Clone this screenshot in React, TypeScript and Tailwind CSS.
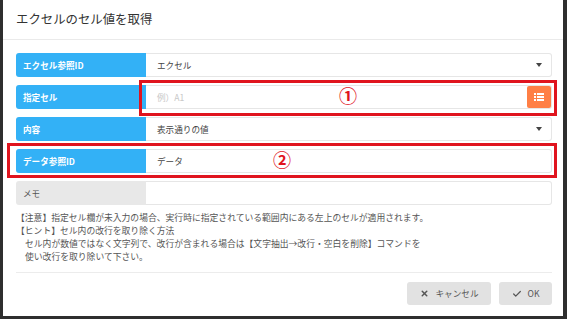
import { Check, X } from "lucide-react"

const font = { fontFamily: '"Noto Sans CJK JP", "Noto Sans", sans-serif' }

function Row({ label, children, gray }: any) {
	return (
		<div className="flex h-[24px] w-full">
			<div
				className={`w-[130px] h-full flex items-center pl-[7px] rounded-l-[3px] text-[8.6px] ${
					gray ? "bg-[#e8e8e8] text-[#555]" : "bg-[#33b1f6] text-white font-bold"
				}`}
			>
				{label}
			</div>
			<div className="flex-1 h-full flex items-center bg-white border border-[#e6e6e6] border-l-0 rounded-r-[3px] text-[8.6px] text-[#444]">
				{children}
			</div>
		</div>
	)
}

function Caret() {
	return <span className="ml-auto mr-[9px] w-0 h-0 border-l-[3px] border-r-[3px] border-t-[4px] border-l-transparent border-r-transparent border-t-[#444]" />
}

export default function App() {
	return (
		<div className="w-[567px] h-[319px] bg-[#2e2e2e] pl-[3px] pr-[4px] pb-[3px]" style={font}>
			<div className="relative w-full h-full bg-white flex flex-col">
				{/* Header */}
				<div className="h-[40px] border-b border-[#eaeaea] flex items-center pl-[13px] text-[12.4px] text-[#333]">
					エクセルのセル値を取得
				</div>

				{/* Form */}
				<div className="flex flex-col gap-[8px] px-[13px] pr-[11px] pt-[13px]">
					<Row label="エクセル参照ID">
						<span className="pl-[11px]">エクセル</span>
						<Caret />
					</Row>
					<Row label="指定セル">
						<span className="pl-[11px] text-[#c8c8c8]">例）A1</span>
						<div className="ml-auto h-[22px] w-[24px] bg-[#ff7f45] rounded-[2px] flex flex-col items-center justify-center gap-[1.5px]">
							{[0, 1, 2].map((i) => (
								<div key={i} className="flex gap-[1px]">
									<span className="w-[1.5px] h-[1.5px] bg-white" />
									<span className="w-[7px] h-[1.5px] bg-white" />
								</div>
							))}
						</div>
					</Row>
					<Row label="内容">
						<span className="pl-[11px]">表示通りの値</span>
						<Caret />
					</Row>
					<Row label="データ参照ID">
						<span className="pl-[11px]">データ</span>
					</Row>
					<Row label="メモ" gray></Row>
				</div>

				{/* Notes */}
				<div className="px-[13px] pt-[6px] text-[8.8px] leading-[13px] text-[#555]">
					<p>【注意】指定セル欄が未入力の場合、実行時に指定されている範囲内にある左上のセルが適用されます。</p>
					<p>【ヒント】セル内の改行を取り除く方法</p>
					<p className="pl-[9px]">セル内が数値ではなく文字列で、改行が含まれる場合は【文字抽出→改行・空白を削除】コマンドを</p>
					<p className="pl-[9px]">使い改行を取り除いて下さい。</p>
				</div>

				{/* Footer */}
				<div className="mx-[13px] mr-[11px] mt-[9px] border-t border-[#ececec] pt-[9px] flex justify-end gap-[8px]">
					<button className="h-[23px] w-[84px] bg-[#e2e2e2] rounded-[3px] flex items-center justify-center gap-[7px] text-[8.6px] text-[#555]">
						<X size={9} strokeWidth={4} />
						キャンセル
					</button>
					<button className="h-[23px] w-[53px] bg-[#e2e2e2] rounded-[3px] flex items-center justify-center gap-[6px] text-[8.6px] text-[#555]">
						<Check size={10} strokeWidth={3} />
						OK
					</button>
				</div>

				{/* Annotations */}
				<div className="absolute left-[136px] top-[80px] w-[418px] h-[36px] border-[3px] border-[#e0141e]" />
				<div className="absolute left-[4px] top-[143px] w-[550px] h-[35px] border-[3px] border-[#e0141e]" />
				<span className="absolute left-[336px] top-[86px] text-[18px] font-bold text-[#e0141e] leading-none">①</span>
				<span className="absolute left-[270px] top-[150px] text-[18px] font-bold text-[#e0141e] leading-none">②</span>
			</div>
		</div>
	)
}
